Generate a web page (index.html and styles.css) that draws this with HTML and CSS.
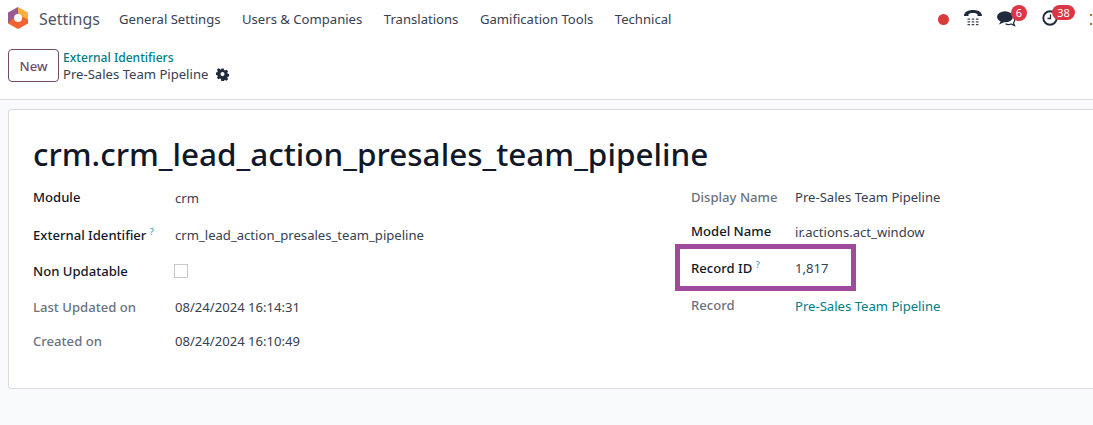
FILE: index.html
```html
<!DOCTYPE html>
<html lang="en">
<head>
<meta charset="utf-8">
<title>Settings</title>
<link rel="stylesheet" href="styles.css">
</head>
<body>
<header class="navbar">
  <svg class="logo" viewBox="0 0 20 22" width="20" height="22">
    <path d="M10 0 20 5.500V13L10 11z" fill="#f5b041"/>
    <path d="M10 0 0 5.500v11L5 14l5-3z" fill="#9a5a92"/>
    <path d="M0 16.500 10 22l10-5.500V12.500L15 10l-5 4-5-3z" fill="#f0652f"/>
    <circle cx="10" cy="11" r="4" fill="#fff"/>
  </svg>
  <span class="brand">Settings</span>
  <nav class="menu">
    <span>General Settings</span>
    <span>Users &amp; Companies</span>
    <span>Translations</span>
    <span>Gamification Tools</span>
    <span>Technical</span>
  </nav>
  <div class="systray">
    <span class="dot"></span>
    <svg class="phone" viewBox="0 0 18 16" width="18" height="16">
      <path d="M0 6C0 2 4 0 9 0s9 2 9 6H13.500V4.300C12.500 3.200 11 3 9 3S5.500 3.200 4.500 4.300V6z" fill="#1f2a3c"/>
      <path d="M3.500 8.500h2.600v1.300H3.500zM7.700 8.500h2.600v1.300H7.700zM11.900 8.500h2.600v1.300H11.900zM3.500 11.200h2.600v1.300H3.500zM7.700 11.200h2.600v1.300H7.700zM11.900 11.200h2.600v1.300H11.900zM3.500 14h2.600v1.300H3.500zM7.700 14h2.600v1.300H7.700zM11.900 14h2.600v1.300H11.900z" fill="#3a4456"/>
    </svg>
    <span class="tray-item chat">
      <svg viewBox="0 0 20 16" width="20" height="16">
        <ellipse cx="8" cy="5.800" rx="8" ry="5.500" fill="#1f2a3c"/>
        <path d="M4 9.500 2 13.500l5.500-2.500z" fill="#1f2a3c"/>
        <path d="M8.500 12.700c1.500 1 4 1 5.500.300l3.500 1.500-1-2.500c1-1 1.500-2.500 1-4" fill="none" stroke="#1f2a3c" stroke-width="1.300"/>
      </svg>
      <b class="badge">6</b>
    </span>
    <span class="tray-item clock">
      <svg viewBox="0 0 16 16" width="16" height="16">
        <circle cx="8" cy="8" r="6.700" fill="none" stroke="#1f2a3c" stroke-width="1.900"/>
        <path d="M8.500 4.500v4H5.500" fill="none" stroke="#1f2a3c" stroke-width="1.300"/>
      </svg>
      <b class="badge wide">38</b>
    </span>
    <span class="cut"></span>
  </div>
</header>
<section class="control">
  <button class="new">New</button>
  <div class="crumbs">
    <a class="crumb-link">External Identifiers</a>
    <div class="crumb-current">
      <span>Pre-Sales Team Pipeline</span>
      <svg viewBox="0 0 16 16" width="13" height="13">
        <path d="M6.500 0h3l.5 2.200 1.300.6 2-1.100 2 2.100-1.100 1.900.6 1.300 2.200.5v3l-2.200.5-.6 1.300 1.100 2-2.100 2-1.900-1.100-1.300.6-.5 2.200h-3L6 13.800l-1.300-.6-2 1.100-2-2.100 1.100-1.900L1.200 9 -.9 8.500v-3L1.200 5l.6-1.300-1.100-2 2.100-2 1.900 1.100L6 2.200z" transform="translate(.5 .5) scale(.94)" fill="#1f2a3c"/>
        <circle cx="8" cy="7.500" r="2.500" fill="#fff"/>
      </svg>
    </div>
  </div>
</section>
<main class="content">
  <article class="sheet">
    <h1>crm.crm_lead_action_presales_team_pipeline</h1>
    <div class="columns">
      <div class="col left">
        <div class="row r1"><label class="strong">Module</label><span>crm</span></div>
        <div class="row r2"><label class="strong">External Identifier <sup>?</sup></label><span>crm_lead_action_presales_team_pipeline</span></div>
        <div class="row r3"><label class="strong">Non Updatable</label><i class="check"></i></div>
        <div class="row r4"><label class="muted">Last Updated on</label><span>08/24/2024 16:14:31</span></div>
        <div class="row r5"><label class="muted">Created on</label><span>08/24/2024 16:10:49</span></div>
      </div>
      <div class="col right">
        <div class="row q1"><label class="muted">Display Name</label><span>Pre-Sales Team Pipeline</span></div>
        <div class="row q2"><label class="strong">Model Name</label><span>ir.actions.act_window</span></div>
        <div class="row q3"><label class="strong">Record ID <sup>?</sup></label><span>1,817</span><div class="highlight"></div></div>
        <div class="row q4"><label class="muted">Record</label><a>Pre-Sales Team Pipeline</a></div>
      </div>
    </div>
  </article>
</main>
</body>
</html>
```
FILE: styles.css
```css
* { box-sizing: border-box; }
html, body { margin: 0; height: 100%; }
body {
  width: 1093px; height: 425px; overflow: hidden; background: #f9fafb;
  font-family: "Noto Sans", "Open Sans", sans-serif; font-size: 13.100px; color: #374151;
}
.navbar { height: 38px; background: #fff; display: flex; align-items: center; padding-left: 8px; }
.logo { flex: none; margin-top: -2px; }
.brand { font-size: 16px; color: #4b5563; margin-left: 11px; width: 80px; }
.menu { display: flex; gap: 21.500px; color: #374151; }
.systray { margin-left: auto; display: flex; align-items: center; color: #fff; position: relative; height: 100%; width: 156px; flex: none; }
.dot { width: 11px; height: 11px; background: #dc3a3a; border-radius: 50%; margin-left: 1px; }
.phone { margin-left: 15px; margin-top: -2px; flex: none; }
.tray-item { position: relative; display: flex; flex: none; }
.chat { margin-left: 15px; margin-top: -1px; }
.clock { margin-left: 25px; margin-top: -2px; }
.badge { position: absolute; top: -6px; background: #dc3545; color: #fff; border-radius: 8px; height: 16px; font-size: 11px; font-weight: 400; line-height: 16px; text-align: center; }
.chat .badge { left: 14px; width: 16px; }
.clock .badge { left: 10px; width: 23px; top: -5px; height: 15px; line-height: 15px; }
.cut { width: 2px; height: 11px; margin-left: 32px; margin-top: 0; border-top: 2px solid #b5702f; border-bottom: 2px solid #b5702f; flex: none; }
.control { height: 62px; background: #fff; border-bottom: 1px solid #d8dadd; display: flex; align-items: flex-start; padding: 11px 0 0 8px; }
.new { width: 51px; height: 33px; border: 1px solid #714b67; border-radius: 4px; background: #fff; color: #714b67; font: 500 13.100px "Noto Sans", sans-serif; padding: 0; }
.crumbs { margin-left: 4px; line-height: 17px; }
.crumb-link { color: #017e84; font-weight: 500; display: block; font-size: 12.100px; }
.crumb-current { color: #374151; display: flex; align-items: center; gap: 8px; }
.content { padding: 9px 0 0 8px; }
.sheet { width: 1100px; height: 280px; background: #fff; border: 1px solid #d8dadd; border-radius: 3px; padding: 22px 24px 0; }
h1 { margin: 0 0 7px; font-size: 31.500px; font-weight: 500; color: #111827; line-height: 44px; }
.columns { display: flex; }
.col { display: flex; flex-direction: column; }
.left { width: 658px; }
.row { display: flex; align-items: center; position: relative; }
.row label { flex: none; }
.left label { width: 142px; }
.right label { width: 104px; }
.strong { color: #111827; font-weight: 500; }
.muted { color: #6b7280; font-weight: 500; }
sup { color: #3f9fc0; font-size: 9px; line-height: 0; }
.r1 { height: 30px; } .r2 { height: 44px; } .r3 { height: 28px; } .r4 { height: 44px; } .r5 { height: 24px; }
.q1 { height: 28px; } .q2 { height: 42px; } .q3 { height: 30px; } .q4 { height: 46px; }
.r1 label, .q2 label, .q4 label { margin-top: -2px; }
.right a { color: #017e84; }
.check { width: 14px; height: 14px; margin-left: -1px; border: 1px solid #c4c7cc; background: #fff; }
.highlight { position: absolute; left: -16px; top: -9px; width: 181px; height: 47px; border: 5px solid #a04a9e; }
```
